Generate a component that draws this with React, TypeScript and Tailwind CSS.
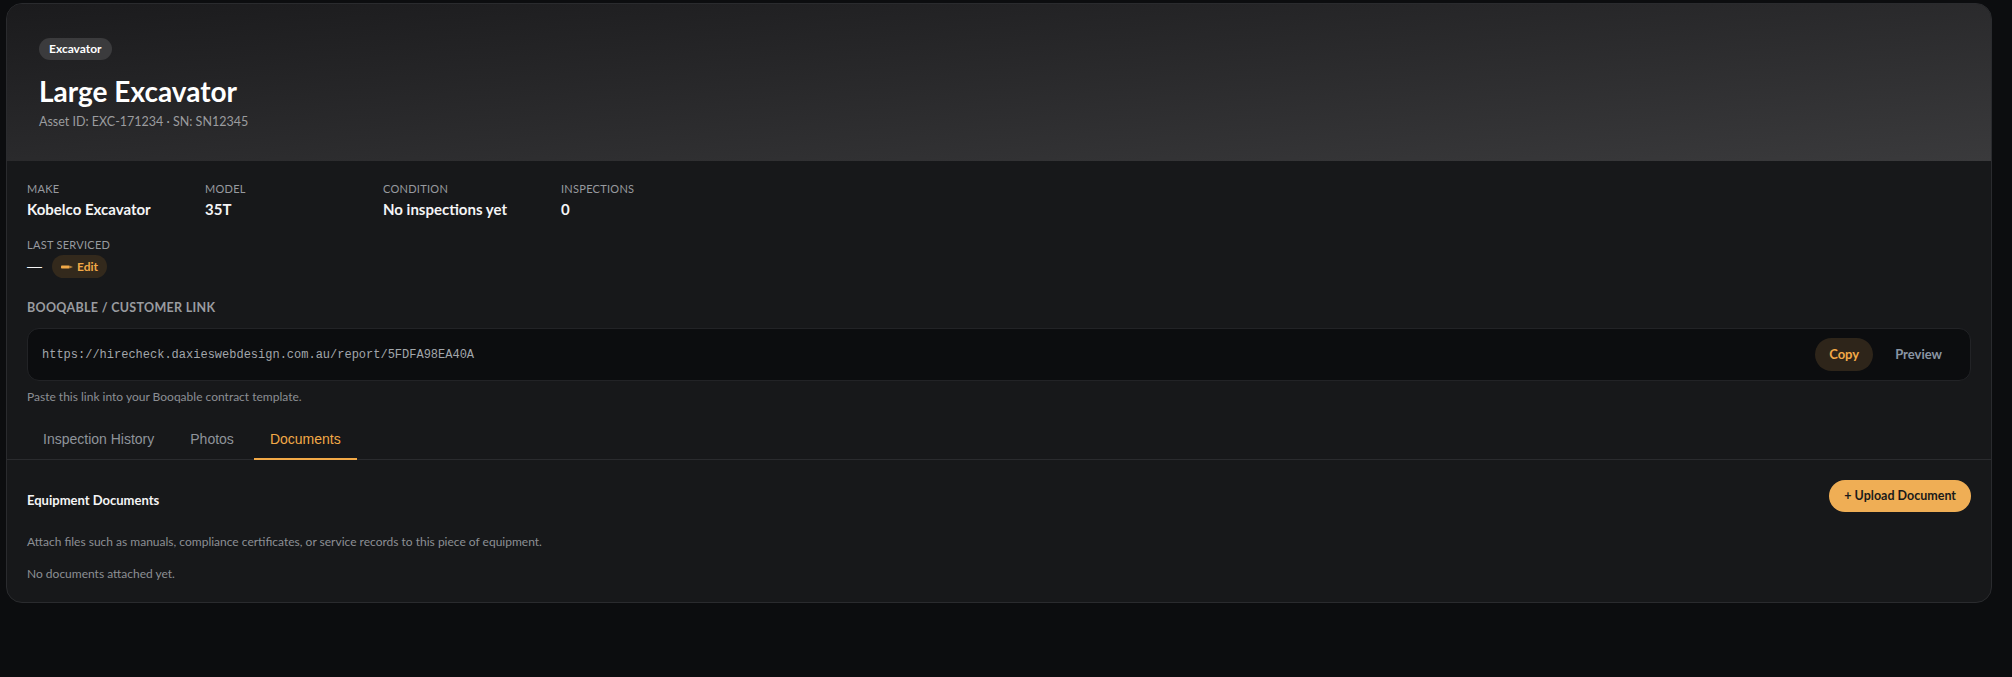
import React from "react"

const specs = [
  { label: "Make", value: "Kobelco Excavator" },
  { label: "Model", value: "35T" },
  { label: "Condition", value: "No inspections yet" },
  { label: "Inspections", value: "0" },
]

const tabs = ["Inspection History", "Photos", "Documents"]

const PencilIcon = () => (
  <svg width="12" height="6" viewBox="0 0 12 6" fill="currentColor">
    <rect x="0" y="1.5" width="8.5" height="3" rx="0.8" />
    <path d="M8.5 1.5 L12 3 L8.5 4.5 Z" opacity="0.7" />
  </svg>
)

export default function App() {
  return (
    <div
      className="min-h-[677px] bg-[#0c0d0f] pl-[6px] pr-[20px] pt-[3px]"
      style={{ fontFamily: "Lato, 'Open Sans', sans-serif" }}
    >
      <div className="overflow-hidden rounded-2xl border border-[#2a2b2e] bg-[#17181a]">
        {/* Header */}
        <div className="bg-linear-to-br from-[#1b1b1d] to-[#3a3a3c] px-8 pt-[31px] pb-[30px]">
          <span className="inline-flex h-[22px] items-center rounded-full bg-[#3b3b3d] px-2.5 text-[12px] font-bold text-white">
            Excavator
          </span>
          <h1 className="mt-[14px] text-[28px] leading-[34px] font-bold text-white">
            Large Excavator
          </h1>
          <p className="mt-[5px] text-[12.5px] leading-[18px] text-[#9b9c9f]">
            Asset ID: EXC-171234 · SN: SN12345
          </p>
        </div>

        {/* Details */}
        <div className="px-5 pt-5">
          <div className="grid grid-cols-[repeat(4,178px)] gap-y-[18px]">
            {specs.map((s) => (
              <div key={s.label}>
                <div className="text-[11px] leading-4 tracking-wide text-[#979a9f] uppercase">
                  {s.label}
                </div>
                <div className="mt-[2px] text-[15px] leading-5 font-bold text-[#f4f4f5]">
                  {s.value}
                </div>
              </div>
            ))}
            <div>
              <div className="text-[11px] leading-4 tracking-wide text-[#979a9f] uppercase">
                Last Serviced
              </div>
              <div className="mt-[2px] flex items-center gap-2.5">
                <span
                  className="text-[15px] text-[#f4f4f5]"
                  style={{ fontFamily: "'Liberation Sans', Arial, sans-serif" }}
                >
                  —
                </span>
                <button className="flex h-[23px] items-center gap-1 rounded-full bg-[#33291c] px-[9px] text-[12px] font-bold text-[#f2a947]">
                  <PencilIcon />
                  Edit
                </button>
              </div>
            </div>
          </div>

          <div className="mt-[22px] text-[12.5px] leading-4 font-bold tracking-wide text-[#9a9ca0] uppercase">
            Booqable / Customer Link
          </div>
          <div className="mt-3 flex items-center justify-between rounded-xl border border-[#222326] bg-[#0c0d0f] px-3.5 py-[9px]">
            <span
              className="text-[12px] text-[#a2a6ab]"
              style={{ fontFamily: "'Liberation Mono', monospace" }}
            >
              https://hirecheck.daxieswebdesign.com.au/report/5FDFA98EA40A
            </span>
            <div className="flex items-center gap-2">
              <button className="h-[33px] rounded-full bg-[#2e251a] px-3.5 text-[13px] font-bold text-[#f2a947]">
                Copy
              </button>
              <button className="h-[33px] rounded-full px-3.5 text-[13px] font-bold text-[#8a95a3]">
                Preview
              </button>
            </div>
          </div>
          <p className="mt-2 text-[12px] leading-4 text-[#8c8f94]">
            Paste this link into your Booqable contract template.
          </p>
        </div>

        {/* Tabs */}
        <div
          className="mt-[14px] flex gap-1 border-b border-[#2a2b2e] px-5"
          style={{ fontFamily: "'Liberation Sans', Arial, sans-serif" }}
        >
          {tabs.map((t) => (
            <button
              key={t}
              className={
                t === "Documents"
                  ? "-mb-px border-b-2 border-[#f2a947] px-4 pt-2.5 pb-[9px] text-[14px] leading-5 text-[#f2a947]"
                  : "-mb-px border-b-2 border-transparent px-4 pt-2.5 pb-[9px] text-[14px] leading-5 text-[#8f949a]"
              }
            >
              {t}
            </button>
          ))}
        </div>

        {/* Documents */}
        <div className="px-5 pt-5 pb-5">
          <div className="flex items-start justify-between">
            <h3 className="pt-[11px] text-[13px] leading-[18px] font-bold text-[#f4f4f5]">
              Equipment Documents
            </h3>
            <button className="h-8 rounded-full bg-[#efae55] px-[15px] text-[12.5px] font-bold text-[#1a1a1a]">
              + Upload Document
            </button>
          </div>
          <p className="mt-[22px] text-[12px] leading-4 text-[#8c8f94]">
            Attach files such as manuals, compliance certificates, or service records to this piece of equipment.
          </p>
          <p className="mt-4 text-[12px] leading-4 text-[#8c8f94]">No documents attached yet.</p>
        </div>
      </div>
    </div>
  )
}
